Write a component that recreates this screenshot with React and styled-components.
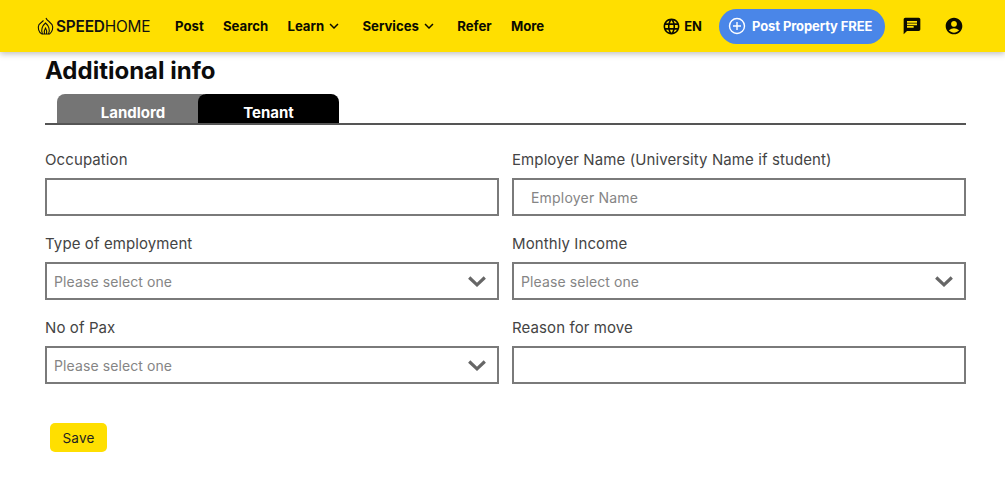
import React from 'react';
import styled, { createGlobalStyle } from 'styled-components';
import { MdChat, MdAccountCircle, MdLanguage, MdExpandMore } from 'react-icons/md';

const GlobalStyle = createGlobalStyle`
  html, body {
    margin: 0;
    padding: 0;
    background: #fff;
    font-family: Inter, "Open Sans", "Liberation Sans", sans-serif;
    overflow: hidden;
  }
  * { box-sizing: border-box; }
`;

const NavBar = styled.header`
  height: 52px;
  background: #ffdf00;
  box-shadow: 0 2px 6px rgba(0, 0, 0, 0.25);
  display: flex;
  align-items: center;
  padding: 0 41px 0 37px;
  position: relative;
`;

const Logo = styled.div`
  display: flex;
  align-items: center;
  gap: 2px;
  font-size: 15.4px;
  color: #111;
  width: 138px;
  font-weight: 400;
  letter-spacing: -0.2px;
  b { font-weight: 600; }
`;

const NavLinks = styled.nav`
  display: flex;
  align-items: center;
  gap: 19.2px;
  flex: 1;
`;

const NavLink = styled.a`
  display: flex;
  align-items: center;
  gap: 1px;
  font-size: 13.2px;
  font-weight: 700;
  color: #0b0b00;
`;

const NavRight = styled.div`
  display: flex;
  align-items: center;
`;

const Lang = styled.div`
  display: flex;
  align-items: center;
  gap: 3px;
  font-size: 13px;
  font-weight: 700;
  color: #0b0b00;
  margin-right: 17px;
`;

const PostButton = styled.button`
  height: 35px;
  width: 166px;
  border: 0;
  border-radius: 18px;
  background: #4a86e8;
  color: #fff;
  font: inherit;
  font-size: 13px;
  font-weight: 700;
  display: flex;
  align-items: center;
  gap: 6px;
  padding: 0 0 0 9px;
  white-space: nowrap;
  letter-spacing: -0.1px;
  margin-right: 16px;
`;

const IconSlot = styled.span`
  display: flex;
  margin-left: ${(p) => p.$gap || 0}px;
  color: #0b0b00;
`;

const Content = styled.main`
  padding: 6px 39px 0 45px;
`;

const Title = styled.h1`
  margin: 0;
  font-size: 24px;
  line-height: 26px;
  font-weight: 700;
  color: #0c0c0c;
`;

const TabBar = styled.div`
  margin-top: 10px;
  display: flex;
  padding-left: 12px;
  border-bottom: 2px solid #555;
  height: 31px;
`;

const Tab = styled.div`
  width: 141px;
  height: 29px;
  border-radius: 8px 8px 0 0;
  background: #000;
  color: #fff;
  font-size: 15px;
  font-weight: 700;
  display: flex;
  align-items: center;
  justify-content: center;
  padding-top: 8px;
  position: relative;
`;

// the grey tab runs on underneath the black one
const BackTab = styled(Tab)`
  width: 152px;
  margin-right: -11px;
  background: #757575;
`;

const FormGrid = styled.div`
  margin-top: 25px;
  display: grid;
  grid-template-columns: 454px 454px;
  column-gap: 13px;
  row-gap: 18px;
`;

const Field = styled.div`
  display: flex;
  flex-direction: column;
`;

const Label = styled.label`
  height: 20px;
  font-size: 15px;
  line-height: 20px;
  letter-spacing: 0.1px;
  color: #444;
  margin-bottom: 8px;
  white-space: nowrap;
`;

const TextInput = styled.input`
  height: 38px;
  width: 100%;
  border: 2px solid #7a7a7a;
  border-radius: 0;
  background: #fff;
  padding: 0 17px;
  font: inherit;
  font-size: 14px;
  letter-spacing: 0.2px;
  color: #333;
  outline: none;
  &::placeholder { color: #858585; opacity: 1; }
`;

const SelectBox = styled.div`
  height: 38px;
  border: 2px solid #7a7a7a;
  display: flex;
  align-items: center;
  justify-content: space-between;
  padding: 0 11px 0 7px;
  font-size: 14px;
  letter-spacing: 0.1px;
  color: #858585;
`;

const SaveButton = styled.button`
  margin: 39px 0 0 5px;
  width: 57px;
  height: 29px;
  border: 0;
  border-radius: 5px;
  background: #ffdf00;
  font: inherit;
  font-size: 13.5px;
  letter-spacing: 0.2px;
  color: #222;
  display: block;
  padding: 0;
`;

const LogoMark = () => (
  <svg width="17" height="18" viewBox="0 0 17 18" fill="none" stroke="#111" strokeWidth="1.1">
    <path d="M9 1 C9.5 2.5 10.5 3.5 12 4.5 L15 7.5 C16.5 10.5 15.5 15 12.5 17 H5 C1.5 15.5 0.5 10.5 2 7.5 L6.5 3.5" />
    <path d="M5.5 17 C3.5 13 5.5 8.5 8.5 6 C11.5 8.5 13.5 13 11.5 17" />
    <path d="M7.5 17 C7 14.5 7.5 12.5 8.5 11 C9.5 12.5 10 14.5 9.5 17" />
  </svg>
);

const PlusCircle = () => (
  <svg width="18" height="18" viewBox="0 0 18 18" fill="none" stroke="#fff" strokeWidth="1.4">
    <circle cx="9" cy="9" r="7.5" />
    <path d="M9 5v8M5 9h8" />
  </svg>
);

const SelectChevron = () => (
  <svg width="18" height="11" viewBox="0 0 18 11" fill="none" stroke="#666" strokeWidth="3.2">
    <path d="M1.2 1.5 L9 8.8 L16.8 1.5" />
  </svg>
);

const SelectField = ({ label }) => (
  <Field>
    <Label>{label}</Label>
    <SelectBox>
      Please select one
      <SelectChevron />
    </SelectBox>
  </Field>
);

const InputField = ({ label, placeholder }) => (
  <Field>
    <Label>{label}</Label>
    <TextInput placeholder={placeholder} />
  </Field>
);

export default function App() {
  return (
    <>
      <GlobalStyle />
      <NavBar>
        <Logo>
          <LogoMark />
          <span><b>SPEED</b>HOME</span>
        </Logo>
        <NavLinks>
          <NavLink>Post</NavLink>
          <NavLink>Search</NavLink>
          <NavLink>Learn <MdExpandMore size={18} /></NavLink>
          <NavLink>Services <MdExpandMore size={18} /></NavLink>
          <NavLink>Refer</NavLink>
          <NavLink>More</NavLink>
        </NavLinks>
        <NavRight>
          <Lang><MdLanguage size={19} />EN</Lang>
          <PostButton><PlusCircle />Post Property FREE</PostButton>
          <IconSlot $gap={1}><MdChat size={20} /></IconSlot>
          <IconSlot $gap={22}><MdAccountCircle size={20} /></IconSlot>
        </NavRight>
      </NavBar>
      <Content>
        <Title>Additional info</Title>
        <TabBar>
          <BackTab>Landlord</BackTab>
          <Tab>Tenant</Tab>
        </TabBar>
        <FormGrid>
          <InputField label="Occupation" />
          <InputField label="Employer Name (University Name if student)" placeholder="Employer Name" />
          <SelectField label="Type of employment" />
          <SelectField label="Monthly Income" />
          <SelectField label="No of Pax" />
          <InputField label="Reason for move" />
        </FormGrid>
        <SaveButton>Save</SaveButton>
      </Content>
    </>
  );
}
